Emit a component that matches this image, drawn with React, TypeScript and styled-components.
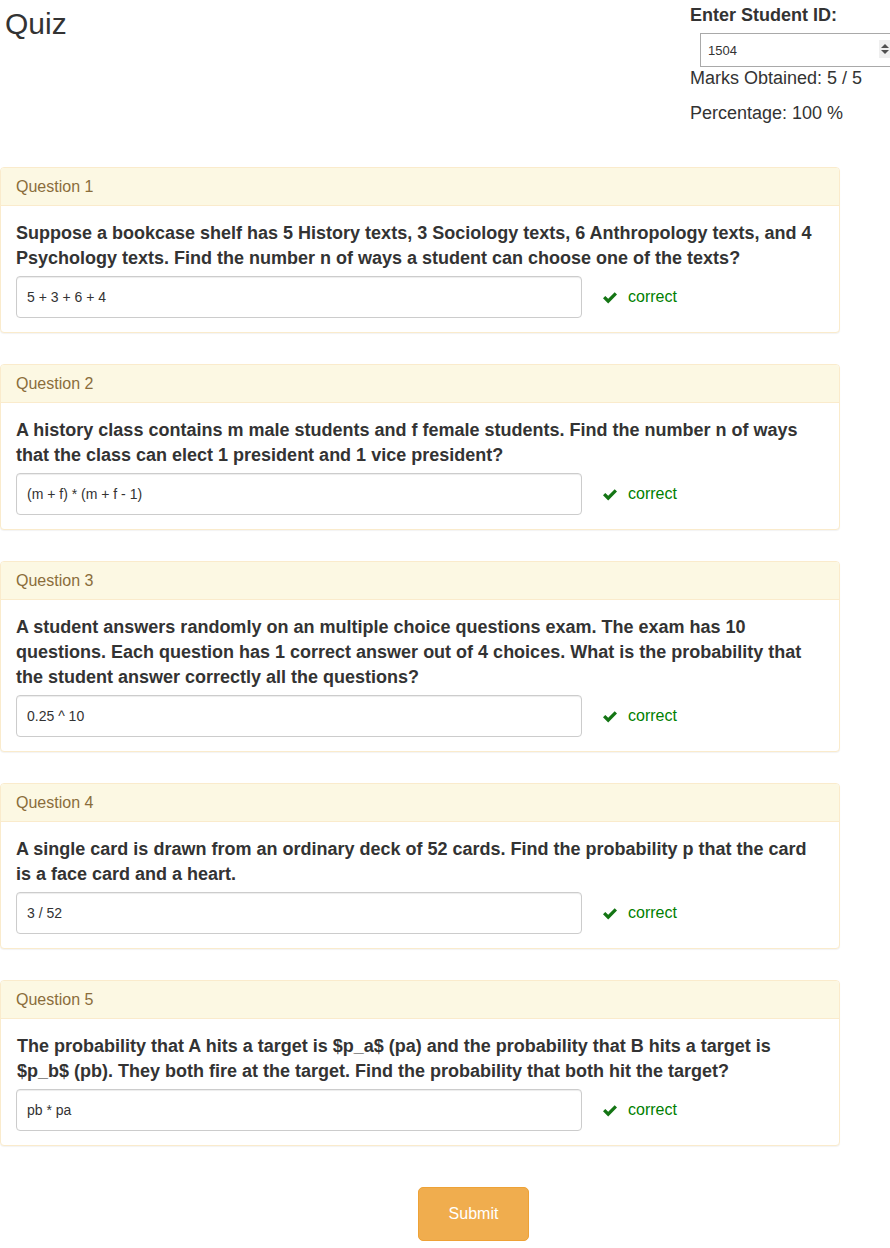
import React from 'react';
import styled, { createGlobalStyle } from 'styled-components';

const Global = createGlobalStyle`
  html, body { margin: 0; padding: 0; background: #fff; overflow-x: hidden; }
  body { font-family: "Liberation Sans", Arial, sans-serif; font-size: 14px; color: #333; }
  * { box-sizing: border-box; }
`;

const Page = styled.div`
  width: 890px;
  overflow: hidden;
  padding-bottom: 7px;
`;

const Header = styled.header`
  display: flex;
  align-items: flex-start;
  height: 167px;
`;

const Title = styled.h1`
  margin: 7px 0 0 5px;
  font-size: 30px;
  line-height: 33px;
  font-weight: 400;
  color: #333;
`;

const Side = styled.div`
  margin-left: auto;
  width: 200px;
  flex-shrink: 0;
  padding-top: 5px;
`;

const SideLabel = styled.label`
  display: block;
  font-size: 18px;
  line-height: 20px;
  font-weight: 700;
`;

const IdField = styled.div`
  position: relative;
  margin: 8px 0 0 10px;
  width: 204px;
`;

const IdInput = styled.input`
  display: block;
  width: 204px;
  height: 34px;
  padding: 6px 12px 6px 7px;
  font-family: "Liberation Sans", Arial, sans-serif;
  font-size: 13px;
  color: #333;
  border: 1px solid #a9a9a9;
  border-radius: 0;
  background: #fff;
  outline: none;
  -moz-appearance: textfield;
  &::-webkit-inner-spin-button,
  &::-webkit-outer-spin-button {
    -webkit-appearance: none;
    margin: 0;
  }
`;

const Spinner = styled.span`
  position: absolute;
  left: 179px;
  top: 7px;
  width: 11px;
  height: 18px;
  background: #efefef;
  display: flex;
  flex-direction: column;
  align-items: center;
  justify-content: center;
  gap: 2px;
`;

const Arrow = styled.span<{ $down?: boolean }>`
  width: 0;
  height: 0;
  border-left: 4px solid transparent;
  border-right: 4px solid transparent;
  ${(p) => (p.$down ? 'border-top: 4px solid #505050;' : 'border-bottom: 4px solid #505050;')}
`;

const Stat = styled.p<{ $gap: number }>`
  margin: ${(p) => p.$gap}px 0 0;
  font-size: 18px;
  line-height: 20px;
`;

const List = styled.div`
  width: 840px;
`;

const Panel = styled.section`
  margin-bottom: 31px;
  border: 1px solid #faebcc;
  border-radius: 4px;
  background: #fff;
  box-shadow: 0 1px 1px rgba(0, 0, 0, 0.05);
`;

const PanelHeading = styled.div`
  padding: 10px 15px;
  font-size: 16px;
  line-height: 17px;
  color: #8a6d3b;
  background: #fcf8e3;
  border-bottom: 1px solid #faebcc;
  border-radius: 3px 3px 0 0;
`;

const PanelBody = styled.div`
  padding: 15px 15px 14px;
`;

const QuestionText = styled.p<{ $indent?: boolean }>`
  margin: 0 0 5px;
  padding-left: ${(p) => (p.$indent ? 1 : 0)}px;
  font-size: 18px;
  line-height: 25px;
  font-weight: 700;
  color: #333;
`;

const AnswerRow = styled.div`
  display: flex;
  align-items: center;
`;

const AnswerInput = styled.input`
  width: 566px;
  height: 42px;
  padding: 6px 10px;
  font-family: "Liberation Sans", Arial, sans-serif;
  font-size: 14px;
  color: #333;
  border: 1px solid #ccc;
  border-radius: 4px;
  box-shadow: inset 0 1px 1px rgba(0, 0, 0, 0.075);
  outline: none;
`;

const Verdict = styled.span`
  display: flex;
  align-items: center;
  margin-left: 21px;
  font-size: 16px;
  line-height: 18px;
  color: #008000;
`;

const CheckIcon = styled.svg`
  width: 14px;
  height: 12px;
  margin-right: 11px;
  margin-top: 1px;
`;

const SubmitRow = styled.div`
  padding: 10px 0 0 418px;
`;

const SubmitButton = styled.button`
  width: 111px;
  height: 54px;
  font-family: "Liberation Sans", Arial, sans-serif;
  font-size: 16px;
  color: #fff;
  background: #f0ad4e;
  border: 1px solid #eea236;
  border-radius: 5px;
  cursor: pointer;
`;

const questions = [
  {
    text: 'Suppose a bookcase shelf has 5 History texts, 3 Sociology texts, 6 Anthropology texts, and 4 Psychology texts. Find the number n of ways a student can choose one of the texts?',
    answer: '5 + 3 + 6 + 4',
  },
  {
    text: 'A history class contains m male students and f female students. Find the number n of ways that the class can elect 1 president and 1 vice president?',
    answer: '(m + f) * (m + f - 1)',
  },
  {
    text: 'A student answers randomly on an multiple choice questions exam. The exam has 10 questions. Each question has 1 correct answer out of 4 choices. What is the probability that the student answer correctly all the questions?',
    answer: '0.25 ^ 10',
  },
  {
    text: 'A single card is drawn from an ordinary deck of 52 cards. Find the probability p that the card is a face card and a heart.',
    answer: '3 / 52',
  },
  {
    text: 'The probability that A hits a target is $p_a$ (pa) and the probability that B hits a target is $p_b$ (pb). They both fire at the target. Find the probability that both hit the target?',
    answer: 'pb * pa',
    indent: true,
  },
];

const Check = () => (
  <CheckIcon viewBox="0 0 14 12">
    <path d="M0 6.2 L2.3 3.9 L5.2 6.8 L11.7 0.3 L14 2.6 L5.2 11.4 Z" fill="#147514" />
  </CheckIcon>
);

export default function App() {
  return (
    <Page>
      <Global />
      <Header>
        <Title>Quiz</Title>
        <Side>
          <SideLabel htmlFor="sid">Enter Student ID:</SideLabel>
          <IdField>
            <IdInput id="sid" type="number" defaultValue={1504} />
            <Spinner aria-hidden="true">
              <Arrow />
              <Arrow $down />
            </Spinner>
          </IdField>
          <Stat $gap={1}>Marks Obtained: 5 / 5</Stat>
          <Stat $gap={15}>Percentage: 100 %</Stat>
        </Side>
      </Header>
      <List>
        {questions.map((q, i) => (
          <Panel key={i}>
            <PanelHeading>Question {i + 1}</PanelHeading>
            <PanelBody>
              <QuestionText $indent={q.indent}>{q.text}</QuestionText>
              <AnswerRow>
                <AnswerInput type="text" defaultValue={q.answer} />
                <Verdict>
                  <Check />
                  correct
                </Verdict>
              </AnswerRow>
            </PanelBody>
          </Panel>
        ))}
      </List>
      <SubmitRow>
        <SubmitButton type="button">Submit</SubmitButton>
      </SubmitRow>
    </Page>
  );
}
